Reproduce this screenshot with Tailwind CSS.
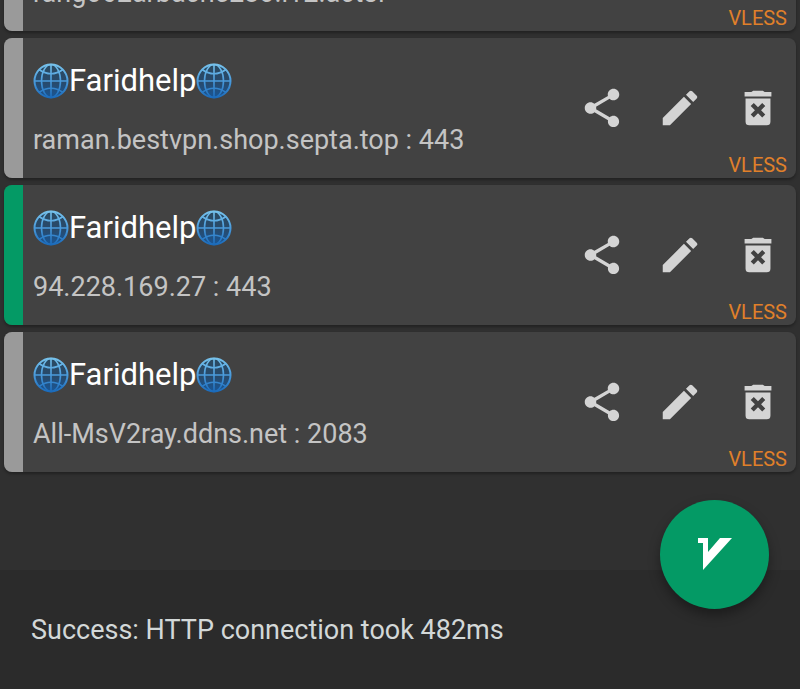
<!doctype html>
<html lang="en">
<head>
  <meta charset="UTF-8">
  <meta name="viewport" content="width=device-width, initial-scale=1.0">
  <title>Servers</title>
  <script src="https://cdn.jsdelivr.net/npm/@tailwindcss/browser@4"></script>
</head>
<body class="h-screen flex flex-col overflow-hidden bg-[#303030] font-[Roboto,sans-serif]">
  <!-- Icons -->
  <svg class="absolute size-0">
    <defs>
      <linearGradient id="globe-line" x1="0" y1="0" x2="0" y2="36" gradientUnits="userSpaceOnUse">
        <stop offset="0" stop-color="#79c4ec"/>
        <stop offset="0.5" stop-color="#4a9bdc"/>
        <stop offset="1" stop-color="#1767b8"/>
      </linearGradient>
      <linearGradient id="globe-fill" x1="0" y1="0" x2="0" y2="36" gradientUnits="userSpaceOnUse">
        <stop offset="0" stop-color="#2b4a60"/>
        <stop offset="0.55" stop-color="#284a6c"/>
        <stop offset="1" stop-color="#17589c"/>
      </linearGradient>
    </defs>
    <symbol id="globe" viewBox="0 0 36 36">
      <circle cx="18" cy="18" r="16.5" fill="url(#globe-fill)"/>
      <g fill="none" stroke="url(#globe-line)" stroke-width="1.6">
        <circle cx="18" cy="18" r="16.5" stroke-width="2"/>
        <ellipse cx="18" cy="18" rx="9.5" ry="16.5"/>
        <path d="M6 6.5Q18 15 30 6.5M6 29.5Q18 21 30 29.5"/>
        <path d="M17.2 1.5h1.6v33h-1.6zM1.5 17.2h33v1.6h-33z" fill="url(#globe-line)" stroke="none"/>
      </g>
    </symbol>
    <symbol id="share" viewBox="0 0 24 24">
      <path d="M18 16.08c-.76 0-1.44.3-1.96.77L8.91 12.7c.05-.23.09-.46.09-.7s-.04-.47-.09-.7l7.05-4.11c.54.5 1.25.81 2.04.81 1.66 0 3-1.34 3-3s-1.34-3-3-3-3 1.34-3 3c0 .24.04.47.09.7L8.04 9.81C7.5 9.31 6.79 9 6 9c-1.66 0-3 1.34-3 3s1.34 3 3 3c.79 0 1.5-.31 2.04-.81l7.12 4.16c-.05.21-.08.43-.08.65 0 1.61 1.31 2.92 2.92 2.92s2.92-1.31 2.92-2.92-1.31-2.92-2.92-2.92z"/>
    </symbol>
    <symbol id="edit" viewBox="0 0 24 24">
      <path d="M3 17.25V21h3.75L17.81 9.94l-3.75-3.75L3 17.25zM20.71 7.04a1 1 0 0 0 0-1.41l-2.34-2.34a1 1 0 0 0-1.41 0l-1.83 1.83 3.75 3.75 1.83-1.83z"/>
    </symbol>
    <symbol id="trash" viewBox="0 0 24 24">
      <path fill-rule="evenodd" d="M5.5 7V19a2 2 0 0 0 2 2h9a2 2 0 0 0 2-2V7zM9.8 9.4 12 11.6l2.2-2.2 1.6 1.6-2.2 2.2 2.2 2.2-1.6 1.6-2.2-2.2-2.2 2.2-1.6-1.6 2.2-2.2-2.2-2.2zM15.5 3.6l-1-.6h-5l-1 .6H5v2.4h14V3.6z"/>
    </symbol>
  </svg>

  <main class="flex-1 min-h-0 flex flex-col justify-end px-1 pb-[98px]">
    <ul id="servers" class="flex flex-col gap-[7px]"></ul>
  </main>

  <footer class="relative bg-[#2b2b2b] px-[31px] pt-10 pb-[39px]">
    <p class="text-[27px] leading-10 text-[#d3d8d8]">Success: HTTP connection took 482ms</p>
    <button aria-label="Connect" class="absolute right-[31px] -top-[70px] size-[109px] rounded-full bg-[#049a65] shadow-[0_6px_12px_rgba(0,0,0,0.35)] flex items-center justify-center">
      <svg class="size-9" viewBox="0 0 36 36" fill="#fff"><path d="M1 1H11V15L23 1H35L6 33V6H1z"/></svg>
    </button>
  </footer>

  <script>
    const servers = [
      { name: 'Faridhelp', address: 'rang062arbache280.i12.actor', active: false },
      { name: 'Faridhelp', address: 'raman.bestvpn.shop.septa.top : 443', active: false },
      { name: 'Faridhelp', address: '94.228.169.27 : 443', active: true },
      { name: 'Faridhelp', address: 'All-MsV2ray.ddns.net : 2083', active: false },
    ];

    document.getElementById('servers').innerHTML = servers.map(server => `
      <li class="relative flex h-[140px] shrink-0 overflow-hidden rounded-lg bg-[#424242] shadow-[0_2px_3px_rgba(0,0,0,0.3)]">
        <div class="w-[19px] ${server.active ? 'bg-[#049a65]' : 'bg-[#9a9a9a]'}"></div>
        <div class="flex-1 min-w-0 pl-[10px] pt-[23px]">
          <h2 class="flex items-center text-[31px] leading-10 text-white">
            <svg class="size-9"><use href="#globe"/></svg>${server.name}<svg class="size-9"><use href="#globe"/></svg>
          </h2>
          <p class="mt-[19px] text-[27px] leading-10 text-[#c4c4c4] whitespace-nowrap">${server.address}</p>
        </div>
        <div class="flex gap-8 pt-[47px] pr-[15px] text-[#d4d4d4]">
          <button aria-label="Share" class="size-[46px]"><svg class="size-full" fill="currentColor"><use href="#share"/></svg></button>
          <button aria-label="Edit" class="size-[46px]"><svg class="size-full" fill="currentColor"><use href="#edit"/></svg></button>
          <button aria-label="Delete" class="size-[46px]"><svg class="size-full" fill="currentColor"><use href="#trash"/></svg></button>
        </div>
        <span class="absolute right-[9px] bottom-px text-[20px] leading-6 text-[#e0802a]">VLESS</span>
      </li>`).join('');
  </script>
</body>
</html>
